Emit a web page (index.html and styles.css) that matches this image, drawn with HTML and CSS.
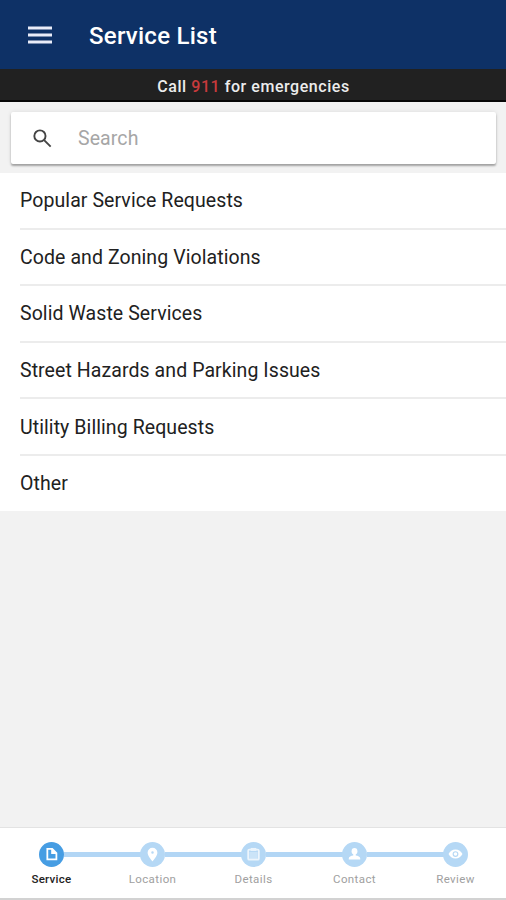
FILE: index.html
```html
<!DOCTYPE html>
<html lang="en">
<head>
<meta charset="utf-8">
<title>Service List</title>
<link rel="stylesheet" href="styles.css">
</head>
<body>
<header class="app-bar">
  <svg class="menu" viewBox="0 0 24 18"><path d="M0 .5h24v3H0zM0 7.500h24v3H0zM0 14.500h24v3H0z"/></svg>
  <h1 class="title">Service List</h1>
</header>
<div class="banner"><span>Call <b class="number">911</b> for emergencies</span></div>
<main class="content">
  <div class="search">
    <svg class="search-icon" viewBox="0 0 20 20"><circle cx="7.300" cy="7.300" r="5.900"/><path d="M11.700 11.700l6.900 6.900"/></svg>
    <span class="placeholder">Search</span>
  </div>
  <ul class="list">
    <li class="item"><span>Popular Service Requests</span></li>
    <li class="item"><span>Code and Zoning Violations</span></li>
    <li class="item"><span>Solid Waste Services</span></li>
    <li class="item"><span>Street Hazards and Parking Issues</span></li>
    <li class="item"><span>Utility Billing Requests</span></li>
    <li class="item"><span>Other</span></li>
  </ul>
</main>
<nav class="steps">
  <div class="step active">
    <div class="dot"><svg viewBox="0 0 24 24"><path class="line" d="M8 6.700h4.700l4 4v5.900H8z"/><path class="fill" d="M11.700 6v5.500h5.500z"/></svg></div>
    <span class="label">Service</span>
  </div>
  <div class="step">
    <div class="dot"><svg viewBox="0 0 24 24"><path class="fill" fill-rule="evenodd" d="M12 5.500a4.700 4.700 0 0 0-4.700 4.700c0 3.300 4.700 8.300 4.700 8.300s4.700-5 4.700-8.300A4.700 4.700 0 0 0 12 5.500zm0 3.300a1.200 1.200 0 1 1 0 2.400 1.200 1.200 0 0 1 0-2.400z"/></svg></div>
    <span class="label">Location</span>
  </div>
  <div class="step">
    <div class="dot"><svg viewBox="0 0 24 24"><g class="soft"><rect class="line" x="6.900" y="7.300" width="10.200" height="9.700" rx="1"/><path class="fill" d="M9.300 5.700h5.400v2.800H9.300z"/></g><path class="fill faint" d="M8 9.500h8v7H8z"/></svg></div>
    <span class="label">Details</span>
  </div>
  <div class="step">
    <div class="dot"><svg viewBox="0 0 24 24"><ellipse class="fill" cx="12" cy="8.900" rx="2.800" ry="3.200"/><path class="fill" d="M10.800 11h2.400v2c2.200.3 4.300 1.100 4.300 2.900v1h-11v-1c0-1.800 2.100-2.600 4.300-2.900z"/></svg></div>
    <span class="label">Contact</span>
  </div>
  <div class="step">
    <div class="dot"><svg viewBox="0 0 24 24"><path class="fill" fill-rule="evenodd" d="M5.300 11.600C6.500 9 9 7.300 12 7.300s5.500 1.700 6.700 4.300c-1.200 2.600-3.700 4.300-6.700 4.300s-5.500-1.700-6.700-4.300zM12 8.800a2.800 2.800 0 1 0 0 5.600 2.800 2.800 0 0 0 0-5.600z"/><circle class="fill" cx="12" cy="11.600" r="1.700"/></svg></div>
    <span class="label">Review</span>
  </div>
</nav>
</body>
</html>
```

FILE: styles.css
```css
* { box-sizing: border-box; }
body {
  margin: 0;
  height: 900px;
  display: flex;
  flex-direction: column;
  overflow: hidden;
  background: #f2f2f2;
  font-family: Roboto, "Liberation Sans", sans-serif;
  color: #212121;
}
.app-bar {
  flex: none;
  height: 69px;
  padding: 1px 0 0 28px;
  display: flex;
  align-items: center;
  background: #0e3166;
  color: #fff;
}
.menu { width: 24px; height: 18px; margin-right: 37px; fill: #e9ecf8; }
.title { margin: 0; padding-top: 1px; font-size: 24px; font-weight: 500; line-height: 28px; letter-spacing: .25px; }
.banner {
  flex: none;
  height: 33px;
  display: flex;
  align-items: center;
  justify-content: center;
  background: #212121;
  border-bottom: 2px solid #080808;
  color: #ececec;
  font-size: 16px;
  font-weight: 500;
  letter-spacing: .55px;
  padding: 3px 0 0 1px;
}
.number { color: #c83a3c; font-weight: 500; }
.content { flex: 1; padding-top: 10px; }
.search {
  height: 52px;
  margin: 0 10px 9px 11px;
  padding-left: 22px;
  display: flex;
  align-items: center;
  background: #fff;
  border-radius: 2px;
  box-shadow: 0 2px 2px rgba(0,0,0,.3), 0 0 4px rgba(0,0,0,.1);
}
.search-icon { width: 19px; height: 19px; margin-right: 26px; fill: none; stroke: #444; stroke-width: 2; }
.placeholder { font-size: 19.500px; letter-spacing: .1px; color: #a6a6a6; }
.list { margin: 0; padding: 0 0 0 20px; list-style: none; background: #fff; }
.item {
  height: 56.600px;
  padding-top: 1px;
  display: flex;
  align-items: center;
  border-bottom: 2px solid #ececec;
  font-size: 19.500px;
  letter-spacing: .08px;
}
.item:last-child { height: 55px; border: 0; }
.steps {
  flex: none;
  height: 73px;
  padding: 14px 0 0 1px;
  display: grid;
  grid-template-columns: repeat(5, 1fr);
  background: #fff;
  border-top: 1px solid #e3e3e3;
  border-bottom: 2px solid #d2d2d2;
}
.step { position: relative; display: flex; flex-direction: column; align-items: center; color: #a0a0a0; }
.step:not(:last-child)::after {
  content: "";
  position: absolute;
  left: calc(50% + 12px);
  top: 10px;
  width: calc(100% - 24px);
  height: 5px;
  background: #b2d6f5;
}
.dot { width: 25px; height: 25px; border-radius: 50%; background: #b5d8f5; }
.dot svg { display: block; width: 25px; height: 25px; }
.active .dot { background: #469de3; }
.fill { fill: #fff; }
.faint { opacity: .3; }
.soft { opacity: .75; }
.line { fill: none; stroke: #fff; stroke-width: 1.700; }
.label { margin-top: 5px; font-size: 11.500px; line-height: 14px; letter-spacing: .4px; }
.active { color: #222; }
.active .label { font-weight: 500; letter-spacing: .3px; }
```
